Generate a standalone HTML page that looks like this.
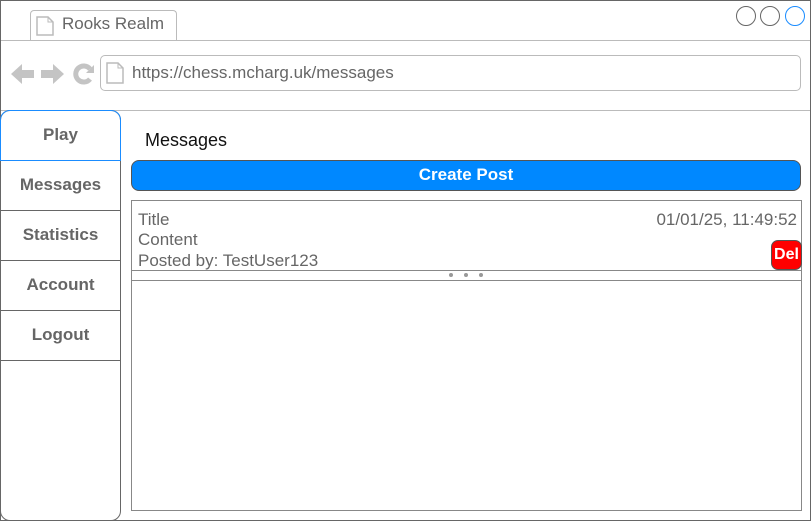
<!DOCTYPE html>
<html><head><style>
*{margin:0;padding:0;box-sizing:border-box}
body{width:811px;height:521px;position:relative;overflow:hidden;background:#fff;font-family:"Liberation Sans",Arial,sans-serif}
.a{position:absolute}
.nav{position:absolute;left:0;width:121px;height:50px;border-bottom:1px solid #666;text-align:center;font-weight:bold;font-size:17px;color:#666;line-height:48px}
.t{font-size:17px;color:#666;position:absolute}
</style></head><body>
<div class="a" style="left:0;top:0;width:811px;height:521px;border:1px solid #666"></div>
<div class="a" style="left:30px;top:10px;width:147px;height:31px;border:1px solid #bbb;border-bottom:none;border-radius:4px 4px 0 0;background:#fff"></div>
<svg class="a" style="left:36px;top:16px" width="18" height="20"><path d="M1 1H12L17 6V19H1Z" fill="#fff" stroke="#bbb" stroke-width="1.5"/><path d="M12 1V6H17" fill="none" stroke="#bbb"/></svg>
<div class="a" style="left:62px;top:14px;font-size:17px;color:#666">Rooks Realm</div>
<div class="a" style="left:1px;top:40px;width:809px;height:1px;background:#bbb"></div>
<div class="a" style="left:736px;top:6px;width:20px;height:20px;border:1px solid #666;border-radius:50%"></div>
<div class="a" style="left:760px;top:6px;width:20px;height:20px;border:1px solid #666;border-radius:50%"></div>
<div class="a" style="left:785px;top:6px;width:20px;height:20px;border:1px solid #1a8cff;border-radius:50%"></div>
<svg class="a" style="left:0;top:60px" width="100" height="28">
<path d="M11 14L22 4V10H34V18H22V24Z" fill="#c4c4c4"/>
<path d="M64 14L53 4V10H41V18H53V24Z" fill="#c4c4c4"/>
<path d="M90 9A8 8 0 1 0 90 19" fill="none" stroke="#c4c4c4" stroke-width="5"/>
<path d="M86 13H94V5Z" fill="#c4c4c4"/>
</svg>
<div class="a" style="left:100px;top:55px;width:701px;height:36px;border:1px solid #bbb;border-radius:5px"></div>
<svg class="a" style="left:106px;top:62px" width="18" height="22"><path d="M1 1H12L17 6V21H1Z" fill="#fff" stroke="#bbb" stroke-width="1.5"/><path d="M12 1V6H17" fill="none" stroke="#bbb"/></svg>
<div class="a" style="left:132px;top:63px;font-size:17px;color:#666">https://chess.mcharg.uk/messages</div>
<div class="a" style="left:1px;top:110px;width:809px;height:1px;background:#bbb"></div>
<div class="a" style="left:0;top:110px;width:121px;height:411px;border:1px solid #666;border-radius:10px"></div>
<div class="nav" style="top:110px;border:1px solid #1a8cff;border-radius:10px 10px 0 0;height:51px">Play</div>
<div class="nav" style="top:161px">Messages</div>
<div class="nav" style="top:211px">Statistics</div>
<div class="nav" style="top:261px">Account</div>
<div class="nav" style="top:311px">Logout</div>
<div class="a" style="left:145px;top:130px;font-size:18px;color:#111">Messages</div>
<div class="a" style="left:131px;top:160px;width:670px;height:31px;background:#0088ff;border:1px solid #555;border-radius:8px;color:#fff;font-weight:bold;font-size:17px;text-align:center;line-height:28px">Create Post</div>
<div class="a" style="left:131px;top:200px;width:671px;height:311px;border:1px solid #888"></div>
<div class="t" style="left:138px;top:210px">Title</div>
<div class="t" style="left:138px;top:230px">Content</div>
<div class="t" style="left:138px;top:251px">Posted by: TestUser123</div>
<div class="t" style="right:14px;top:210px">01/01/25, 11:49:52</div>
<div class="a" style="left:771px;top:240px;width:31px;height:30px;background:#f00;border:1px solid #555;border-radius:7px;color:#fff;font-weight:bold;font-size:16px;text-align:center;line-height:28px">Del</div>
<div class="a" style="left:131px;top:270px;width:671px;height:1px;background:#888"></div>
<div class="a" style="left:131px;top:280px;width:671px;height:1px;background:#888"></div>
<div class="a" style="left:449px;top:273px;width:4px;height:4px;border-radius:50%;background:#999"></div>
<div class="a" style="left:464px;top:273px;width:4px;height:4px;border-radius:50%;background:#999"></div>
<div class="a" style="left:479px;top:273px;width:4px;height:4px;border-radius:50%;background:#999"></div>
</body></html>
